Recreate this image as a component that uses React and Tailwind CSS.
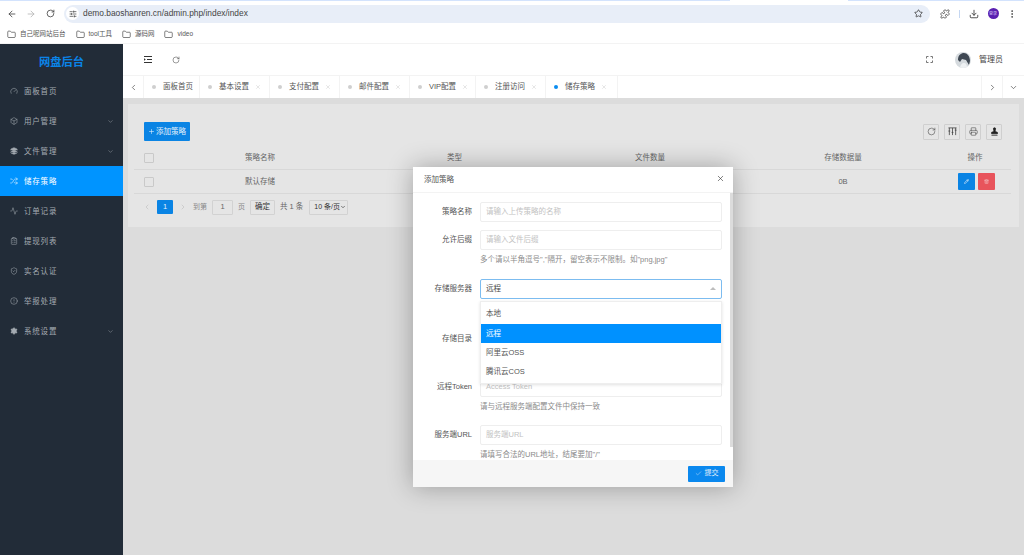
import React from "react";
import { ArrowLeft, ArrowRight, RotateCw, SlidersHorizontal, Star, Puzzle, Download, MoreVertical, Folder, Gauge, Box, Layers, Shuffle, Activity, ClipboardList, ShieldCheck, AlertCircle, Settings, ChevronDown, ChevronLeft, ChevronRight, X, Check, Plus, Printer, Pencil, Trash2, Stamp } from "lucide-react";

const font = "font-['Liberation_Sans','Noto_Sans_CJK_SC',sans-serif]";

const menu = [
  [Gauge, "面板首页", false],
  [Box, "用户管理", true],
  [Layers, "文件管理", true, false, true],
  [Shuffle, "储存策略", false, true],
  [Activity, "订单记录", false],
  [ClipboardList, "提现列表", false],
  [ShieldCheck, "实名认证", false],
  [AlertCircle, "举报处理", false],
  [Settings, "系统设置", true, false, true],
];

const tabs = [
  ["面板首页", false, false, 56],
  ["基本设置", true, false, 70],
  ["支付配置", true, false, 70],
  ["邮件配置", true, false, 70],
  ["VIP配置", true, false, 66],
  ["注册访问", true, false, 70],
  ["储存策略", true, true, 72],
];

function Field({ label, placeholder, help }) {
  return (
    <div className="flex items-start">
      <div className="w-[59px] h-[20px] leading-[20px] text-right text-[#555] shrink-0 whitespace-nowrap">{label}</div>
      <div className="ml-[8px] w-[242px]">
        <div className="h-[20px] border border-[#eeeeee] rounded-[2px] px-[5px] leading-[18px] text-[#c2c2c2] bg-white overflow-hidden">{placeholder}</div>
        {help && <div className="mt-[5px] leading-[10px] text-[#8a8a8a] whitespace-nowrap">{help}</div>}
      </div>
    </div>
  );
}

function ColumnsIcon() {
  return (
    <svg viewBox="0 0 10 10" className="w-[9px] h-[9px]" fill="none" stroke="currentColor" strokeWidth="0.9">
      <path d="M0.5 1h9M1.5 1v8M5 1v8M8.5 1v8" />
      <path d="M0.5 4.5h2M4 6h2M7.5 3.5h2" />
    </svg>
  );
}

export default function App() {
  return (
    <div className={"w-[1024px] h-[555px] overflow-hidden flex flex-col bg-white text-[7.5px] " + font}>
      {/* browser chrome */}
      <div className="h-[44px] shrink-0 relative flex flex-col border-b border-[#f3f3f3]">
        <div className="h-[3px] bg-white flex">
          <div className="w-[730px] h-[1px] bg-[#d3e3fd]"></div>
          <div className="w-[118px]"></div>
          <div className="flex-1 h-[1px] bg-[#d3e3fd]"></div>
        </div>
        <div className="h-[19px] mt-[1px] flex items-center text-[#474747]">
          <ArrowLeft className="ml-[7px] w-[10px] h-[10px]" strokeWidth={2} />
          <ArrowRight className="ml-[9px] w-[10px] h-[10px] text-[#b5b5b5]" strokeWidth={2} />
          <RotateCw className="ml-[10px] w-[9px] h-[9px]" strokeWidth={2.2} />
          <div className="ml-[9px] w-[866px] h-[18px] rounded-full bg-[#e8eef8] flex items-center">
            <div className="ml-[2px] w-[13px] h-[13px] rounded-full bg-white flex items-center justify-center">
              <SlidersHorizontal className="w-[8px] h-[8px]" strokeWidth={2.2} />
            </div>
            <span className="ml-[4px] text-[8.4px] text-[#444]">demo.baoshanren.cn/admin.php/index/index</span>
            <Star className="ml-auto mr-[7.5px] w-[9px] h-[9px] text-[#333]" strokeWidth={2} />
          </div>
          <Puzzle className="ml-[10px] w-[10px] h-[10px] text-[#444]" strokeWidth={2} />
          <div className="ml-[9px] w-[1px] h-[8px] bg-[#c5d7f2]"></div>
          <Download className="ml-[9px] w-[10px] h-[10px] text-[#333]" strokeWidth={2} />
          <div className="ml-[8.5px] w-[11px] h-[11px] rounded-full bg-[#5a1fb0] flex items-center justify-center text-[4px] text-[#d8c8f5]">登录</div>
          <MoreVertical className="ml-[8px] w-[10px] h-[10px] text-[#444]" strokeWidth={2} />
        </div>
        <div className="h-[20px] pt-[2px] flex items-center text-[#555] text-[6.5px]">
          {[["自己呢网站后台", 7], ["tool工具", 10], ["源码网", 10], ["video", 10]].map(([t, m]) => (
            <div key={t} className="flex items-center" style={{ marginLeft: m }}>
              <Folder className="w-[9px] h-[9px] text-[#444]" strokeWidth={1.8} />
              <span className="ml-[4px]">{t}</span>
            </div>
          ))}
        </div>
      </div>

      <div className="flex-1 flex min-h-0">
        {/* sidebar */}
        <aside className="w-[123px] shrink-0 bg-[#222c38] flex flex-col">
          <div className="h-[32px] pt-[4px] flex items-center justify-center text-[11.25px] font-bold text-[#0a84e8]">网盘后台</div>
          {menu.map(([Icon, label, arrow, active, solid]) => (
            <div key={label} className={"h-[30px] flex items-center pl-[10px] tracking-[0.8px] " + (active ? "bg-[#0094ff] text-white" : "text-[#a5abb2]")}>
              <Icon className="w-[8px] h-[8px]" strokeWidth={1.6} fill={solid ? "currentColor" : "none"} />
              <span className="ml-[6px] pt-[1px]">{label}</span>
              {arrow && <ChevronDown className="ml-auto mr-[9px] w-[7px] h-[7px]" strokeWidth={1.5} />}
            </div>
          ))}
        </aside>

        <main className="flex-1 flex flex-col min-w-0">
          {/* header */}
          <div className="h-[32px] shrink-0 flex items-center text-[#444] border-b border-[#f3f3f3]">
            <svg viewBox="0 0 8 7" className="ml-[21px] w-[8px] h-[7px]" fill="none" stroke="#333" strokeWidth="1">
              <path d="M0 .5h8M3 3.5h5M0 6.5h8" />
              <path d="M0 2.3v2.4L1.8 3.5z" fill="#333" stroke="none" />
            </svg>
            <RotateCw className="ml-[20px] w-[8px] h-[8px]" strokeWidth={1.6} />
            <svg viewBox="0 0 7 7" className="ml-auto w-[7px] h-[7px]" fill="none" stroke="#666" strokeWidth="0.9">
              <path d="M.5 2.5v-2h2M4.5.5h2v2M6.5 4.5v2h-2M2.5 6.5h-2v-2" />
            </svg>
            <div className="ml-[22px] w-[16px] h-[16px] rounded-full overflow-hidden">
              <svg viewBox="0 0 16 16" className="block w-full h-full">
                <rect width="16" height="16" fill="#d5dade" />
                <path d="M3 8C3 3 6 1 9 1s6 3 6 8l-1 4-3-5-4-1-2 3z" fill="#3f4853" />
                <path d="M5 16c0-3 2-5 4-5s3 2 3 5z" fill="#eef1f3" />
              </svg>
            </div>
            <span className="ml-[8px] mr-[21px] text-[#444] text-[8px]">管理员</span>
          </div>
          {/* tabs */}
          <div className="h-[22px] shrink-0 flex items-center text-[#666] bg-white">
            <div className="w-[21px] h-full flex items-center justify-center border-r border-[#f3f3f3]">
              <ChevronLeft className="w-[9px] h-[9px] text-[#333]" strokeWidth={1.6} />
            </div>
            {tabs.map(([t, x, a, w]) => (
              <div key={t} className="h-full flex items-center pl-[8px] border-r border-[#f3f3f3]" style={{ width: w }}>
                <span className={"w-[4px] h-[4px] rounded-full " + (a ? "bg-[#0a8cf0]" : "bg-[#cfcfcf]")}></span>
                <span className="ml-[7px] text-[#555] whitespace-nowrap">{t}</span>
                {x && <X className="ml-[6px] w-[6px] h-[6px] text-[#bbb]" strokeWidth={1.5} />}
              </div>
            ))}
            <div className="ml-auto w-[21px] h-full flex items-center justify-center border-l border-[#f3f3f3]">
              <ChevronRight className="w-[9px] h-[9px] text-[#333]" strokeWidth={1.6} />
            </div>
            <div className="w-[22px] h-full flex items-center justify-center border-l border-[#f3f3f3]">
              <ChevronDown className="w-[9px] h-[9px] text-[#333]" strokeWidth={1.6} />
            </div>
          </div>
          {/* content */}
          <div className="flex-1 relative bg-[#dcdcdc] pt-[6px] pl-[5px] pr-[5px] min-h-0">
            <div className="h-[123px] bg-[#e5e5e5] px-[6px] text-[#666]">
              <div className="h-[42px] flex items-center pl-[10px]">
                <button className="mt-[13px] h-[19px] w-[46px] bg-[#0a84e4] text-[#e2f0fb] rounded-[1px] flex items-center justify-center whitespace-nowrap">
                  <Plus className="w-[7px] h-[7px] mr-[1px]" strokeWidth={2} />添加策略
                </button>
                <div className="ml-auto mr-[11px] mt-[13px] flex gap-[5px] text-[#444]">
                  <div className="w-[16px] h-[16px] border border-[#cfcfcf] rounded-[1px] flex items-center justify-center">
                    <RotateCw className="w-[9px] h-[9px]" strokeWidth={1.5} />
                  </div>
                  <div className="w-[16px] h-[16px] border border-[#cfcfcf] rounded-[1px] flex items-center justify-center">
                    <ColumnsIcon />
                  </div>
                  <div className="w-[16px] h-[16px] border border-[#cfcfcf] rounded-[1px] flex items-center justify-center">
                    <Printer className="w-[9px] h-[9px]" strokeWidth={1.5} />
                  </div>
                  <div className="w-[16px] h-[16px] border border-[#cfcfcf] rounded-[1px] flex items-center justify-center text-[#222]">
                    <Stamp className="w-[9px] h-[9px]" strokeWidth={2} fill="currentColor" />
                  </div>
                </div>
              </div>
              <div className="h-[24px] mr-[2px] flex items-center border-b border-[#d8d8d8]">
                <div className="ml-[10px] w-[10px] h-[10px] border border-[#c9c9c9] rounded-[1px]"></div>
                <span className="ml-[91px] w-[202px]">策略名称</span>
                <span className="w-[188px]">类型</span>
                <span className="w-[160px]">文件数量</span>
                <span className="w-[96px] text-center">存储数据量</span>
                <span className="ml-[64px] w-[40px] text-center">操作</span>
              </div>
              <div className="h-[24px] mr-[2px] flex items-center border-b border-[#d8d8d8]">
                <div className="ml-[10px] w-[10px] h-[10px] border border-[#c9c9c9] rounded-[1px]"></div>
                <span className="ml-[91px] w-[202px]">默认存储</span>
                <span className="w-[348px]"></span>
                <span className="w-[96px] text-center">0B</span>
                <div className="ml-[67px] flex gap-[3px]">
                  <div className="w-[17px] h-[17px] bg-[#0a84e4] rounded-[1px] flex items-center justify-center">
                    <Pencil className="w-[5px] h-[5px] text-white" strokeWidth={2.5} />
                  </div>
                  <div className="w-[17px] h-[17px] bg-[#e8545c] rounded-[1px] flex items-center justify-center">
                    <Trash2 className="w-[5px] h-[5px] text-[#f5c4c7]" strokeWidth={2.5} />
                  </div>
                </div>
              </div>
              <div className="h-[25px] pt-[1px] flex items-center text-[#666] whitespace-nowrap">
                <ChevronLeft className="ml-[9px] w-[8px] h-[8px] text-[#b5b5b5]" strokeWidth={1.5} />
                <div className="ml-[6px] w-[16px] h-[14px] bg-[#0a84e4] text-[#e2f0fb] flex items-center justify-center rounded-[1px]">1</div>
                <ChevronRight className="ml-[6px] w-[8px] h-[8px] text-[#b5b5b5]" strokeWidth={1.5} />
                <span className="ml-[6px] text-[#888] text-[7px]">到第</span>
                <div className="ml-[5px] w-[21px] h-[15px] border border-[#d2d2d2] flex items-center justify-center rounded-[1px]">1</div>
                <span className="ml-[5px] text-[#888] text-[7px]">页</span>
                <div className="ml-[5px] w-[25px] h-[15px] border border-[#d2d2d2] flex items-center justify-center rounded-[1px] text-[#333]">确定</div>
                <span className="ml-[5px]">共 1 条</span>
                <div className="ml-[6px] w-[39px] h-[15px] border border-[#d2d2d2] flex items-center justify-between pl-[4px] pr-[1px] rounded-[1px] text-[#333] text-[7px]">10 条/页<ChevronDown className="w-[6px] h-[6px]" strokeWidth={2.5} /></div>
              </div>
            </div>

            {/* modal */}
            <div className="absolute left-[290px] top-[69px] w-[320px] h-[320px] bg-white flex flex-col shadow-[0_0_24px_rgba(0,0,0,0.3)]">
              <div className="h-[26px] shrink-0 flex items-center justify-between pl-[11px] pr-[8px] border-b border-[#f3f3f3] text-[#555]">
                添加策略
                <X className="w-[9px] h-[9px] text-[#333] -mt-[2px]" strokeWidth={1.6} />
              </div>
              <div className="flex-1 min-h-0 overflow-hidden relative pt-[9px] flex flex-col">
                <div className="absolute right-0 top-0 w-[3px] h-[254px] bg-[#dcdcdc]"></div>
                <Field label="策略名称" placeholder="请输入上传策略的名称" />
                <div className="h-[8px] shrink-0"></div>
                <Field label="允许后缀" placeholder="请输入文件后缀" help={'多个请以半角逗号","隔开，留空表示不限制。如"png,jpg"'} />
                <div className="h-[14px] shrink-0"></div>
                <div className="flex items-start relative">
                  <div className="w-[59px] h-[20px] leading-[20px] text-right text-[#555] shrink-0 whitespace-nowrap">存储服务器</div>
                  <div className="ml-[8px] w-[242px] h-[20px] border border-[#7cbcf0] rounded-[2px] px-[5px] leading-[18px] text-[#444] relative">
                    远程
                    <span className="absolute right-[5px] top-[7px] border-x-[3px] border-x-transparent border-b-[3.5px] border-b-[#bdbdbd]"></span>
                  </div>
                  {/* dropdown */}
                  <div className="absolute left-[67px] top-[22px] w-[242px] h-[83px] z-10 bg-white border border-[#eeeeee] shadow-[0_1px_3px_rgba(0,0,0,0.12)] text-[#555] flex flex-col">
                    <div className="h-[21.5px] shrink-0 leading-[23px] px-[5px]">本地</div>
                    <div className="h-[19px] shrink-0 leading-[19px] px-[5px] bg-[#0091ff] text-white">远程</div>
                    <div className="h-[19px] shrink-0 leading-[19px] px-[5px]">阿里云OSS</div>
                    <div className="h-[19px] shrink-0 leading-[19px] px-[5px]">腾讯云COS</div>
                  </div>
                </div>
                <div className="h-[30px] shrink-0"></div>
                <div className="flex items-start h-[20px] shrink-0">
                  <div className="w-[59px] leading-[20px] text-right text-[#555] shrink-0">存储目录</div>
                </div>
                <div className="h-[28px] shrink-0"></div>
                <Field label="远程Token" placeholder="Access Token" help="请与远程服务端配置文件中保持一致" />
                <div className="h-[13px] shrink-0"></div>
                <Field label="服务端URL" placeholder="服务端URL" help={'请填写合法的URL地址，结尾要加"/"'} />
              </div>
              <div className="h-[27px] shrink-0 bg-[#f6f6f6] flex items-center justify-end pr-[8px]">
                <button className="w-[37px] h-[16px] bg-[#0a88ee] text-[#e2f0fb] flex items-center justify-center rounded-[1px] text-[7px]">
                  <Check className="w-[7px] h-[7px] mr-[3px]" strokeWidth={1.5} />提交
                </button>
              </div>
            </div>
          </div>
        </main>
      </div>
    </div>
  );
}
